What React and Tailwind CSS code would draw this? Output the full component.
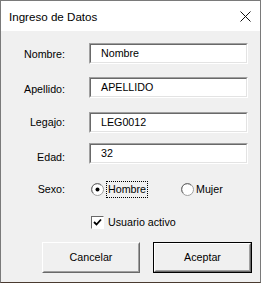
import React from "react";

const font = { fontFamily: '"Liberation Sans", Arial, sans-serif' };

const Field = ({ label, value, labelPad, mt }) => (
  <div className={`flex items-start ${mt}`}>
    <div className={`w-[64px] text-right leading-[13px] ${labelPad}`}>{label}</div>
    <div className="ml-[24px] w-[159px] h-[21px] border border-t-[#a0a0a0] border-l-[#a0a0a0] border-r-white border-b-white">
      <div className="h-full border border-t-[#696969] border-l-[#696969] border-r-[#e3e3e3] border-b-[#e3e3e3] bg-white flex items-center pl-[10px] leading-[13px]">
        {value}
      </div>
    </div>
  </div>
);

const Radio = ({ checked }) => (
  <svg width="13" height="13" viewBox="0 0 13 13" className="shrink-0">
    <circle cx="6.5" cy="6.5" r="6" fill="#fff" stroke="#a0a0a0" />
    <path d="M2.3 10.2 A5 5 0 0 1 10.2 2.3" fill="none" stroke="#696969" strokeWidth="1" />
    {checked && <circle cx="6.5" cy="6.5" r="2" fill="#000" />}
  </svg>
);

const Btn = ({ children, isDefault, w }) => (
  <div className={`${w} h-[31px] ${isDefault ? "border border-black" : ""}`}>
    <div className="h-full border border-t-white border-l-white border-r-[#696969] border-b-[#696969]">
      <div className="h-full border border-t-[#f0f0f0] border-l-[#f0f0f0] border-r-[#a0a0a0] border-b-[#a0a0a0] bg-[#f0f0f0] flex items-center justify-center">
        {children}
      </div>
    </div>
  </div>
);

export default function App() {
  return (
    <div
      style={font}
      className="w-[261px] h-[283px] border border-[#7a7a7a] border-b-[#4a3a30] flex flex-col text-[10.7px] text-black"
    >
      <div className="h-[30px] bg-white flex items-center justify-between pl-[8px] pr-[9px]">
        <span className="text-[11.6px] leading-[14px] pt-[1px]">Ingreso de Datos</span>
        <svg width="11" height="11" viewBox="0 0 11 11">
          <path d="M0.5 0.5 L10.5 10.5 M10.5 0.5 L0.5 10.5" stroke="#111" strokeWidth="1" />
        </svg>
      </div>
      <div className="flex-1 bg-[#f0f0f0] pt-[12px]">
        <Field label="Nombre:" value="Nombre" labelPad="pt-[5px]" mt="" />
        <Field label="Apellido:" value="APELLIDO" labelPad="pt-[6px]" mt="mt-[13px]" />
        <Field label="Legajo:" value="LEG0012" labelPad="pt-[4px]" mt="mt-[14px]" />
        <Field label="Edad:" value="32" labelPad="pt-[8px]" mt="mt-[10px]" />

        <div className="flex items-center h-[17px] mt-[17px]">
          <div className="w-[64px] text-right leading-[13px]">Sexo:</div>
          <div className="ml-[26px] flex items-center">
            <Radio checked />
            <div className="ml-[2px] h-[17px] w-[42px] border border-dotted border-black flex items-center pl-[1px] leading-[13px]">
              Hombre
            </div>
            <div className="ml-[33px] flex items-center">
              <Radio />
              <span className="ml-[2px] leading-[13px]">Mujer</span>
            </div>
          </div>
        </div>

        <div className="flex items-center h-[15px] mt-[17px] pl-[90px]">
          <div className="w-[13px] h-[13px] border border-t-[#696969] border-l-[#696969] border-r-white border-b-white bg-white flex items-center justify-center">
            <svg width="9" height="9" viewBox="0 0 9 9">
              <path d="M1 4 L3.5 6.5 L8 1.5" fill="none" stroke="#000" strokeWidth="1.8" />
            </svg>
          </div>
          <span className="ml-[4px] leading-[13px]">Usuario activo</span>
        </div>

        <div className="flex mt-[12px] pl-[41px] gap-[13px]">
          <Btn w="w-[98px]">Cancelar</Btn>
          <Btn w="w-[99px]" isDefault>Aceptar</Btn>
        </div>
      </div>
    </div>
  );
}
